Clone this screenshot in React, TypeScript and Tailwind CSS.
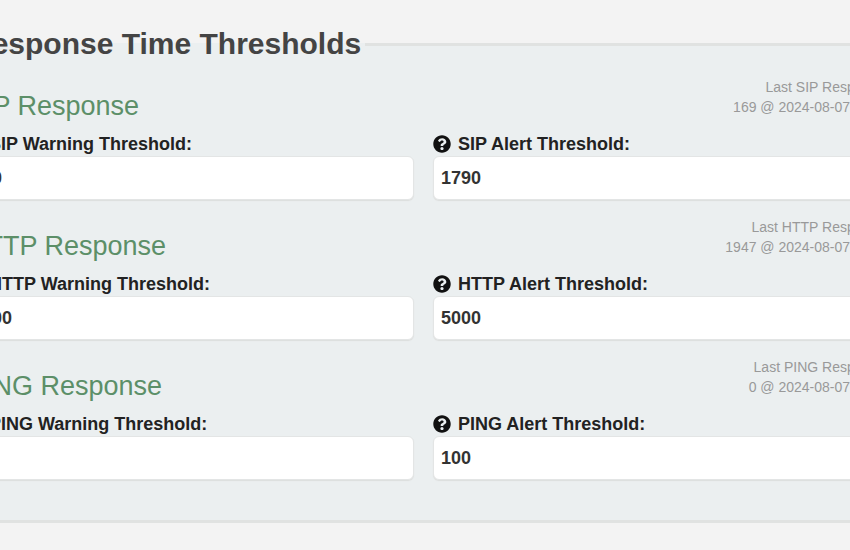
import { useState } from 'react';
import { FaQuestionCircle } from 'react-icons/fa';

interface Threshold {
  name: string;
  warning: string;
  alert: string;
  last: string;
}

const THRESHOLDS: Threshold[] = [
  { name: 'SIP', warning: '900', alert: '1790', last: '169 @ 2024-08-07 12:10' },
  { name: 'HTTP', warning: '3000', alert: '5000', last: '1947 @ 2024-08-07 12:10' },
  { name: 'PING', warning: '50', alert: '100', last: '0 @ 2024-08-07 12:10' },
];

interface FieldProps {
  id: string;
  label: string;
  initial: string;
}

function ThresholdField({ id, label, initial }: FieldProps) {
  const [value, setValue] = useState(initial);

  return (
    <div>
      <label htmlFor={id} className="flex items-center gap-[7px] text-[18px] leading-6 font-bold text-[#222222]">
        <FaQuestionCircle className="size-[18px] text-[#111111]" />
        {label}
      </label>
      <input
        id={id}
        type="text"
        value={value}
        onChange={(e) => setValue(e.target.value)}
        className="block h-11 w-full rounded-md border border-[#e3e5e5] bg-white px-[7px] text-[18px] font-bold text-[#333333] shadow-[0_1px_1px_#dcdedd] focus:outline-none focus:border-gray-400"
      />
    </div>
  );
}

export default function App() {
  return (
    <main className="min-h-screen overflow-hidden bg-[#f3f3f3] pt-[26px] font-['Liberation_Sans',Arial,sans-serif]">
      {/* The panel is wider than the window and runs off both sides */}
      <fieldset className="-mr-[53px] -ml-14 border-y-3 border-[#e0e2e1] bg-[#ebeff0] px-5 pb-10">
        <legend className="ml-1.5 pr-1 text-[30px] leading-9 font-bold text-[#444444]">
          Response Time Thresholds
        </legend>

        <div className="flex flex-col gap-4 pt-[14px]">
          {THRESHOLDS.map((item) => (
            <section key={item.name}>
              <div className="flex h-14 items-start justify-between">
                <h2 className="mt-[14px] pl-[3px] text-[27px] leading-8 text-[#5c8f68]">{item.name} Response</h2>
                <p className="-mr-1.5 pt-px text-right text-[14px] leading-5 text-[#999999]">
                  Last {item.name} Response:
                  <br />
                  {item.last}
                </p>
              </div>
              <div className="grid grid-cols-2 gap-[19px]">
                <ThresholdField
                  id={`${item.name}-warning`}
                  label={`${item.name} Warning Threshold:`}
                  initial={item.warning}
                />
                <ThresholdField
                  id={`${item.name}-alert`}
                  label={`${item.name} Alert Threshold:`}
                  initial={item.alert}
                />
              </div>
            </section>
          ))}
        </div>
      </fieldset>
    </main>
  );
}
